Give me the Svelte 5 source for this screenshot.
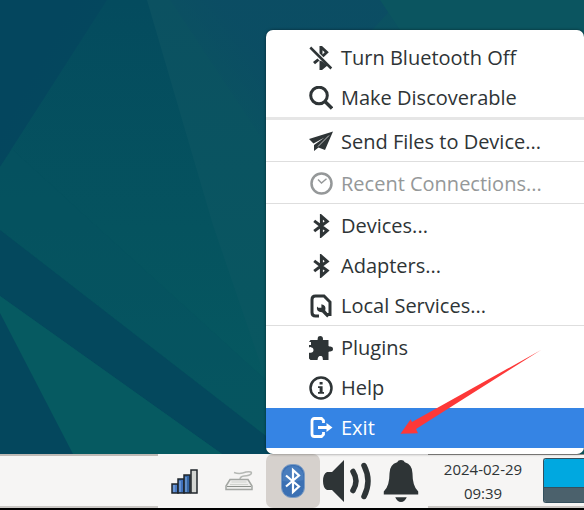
<script>
  const groups = [
    [
      { icon: 'bluetooth-off', label: 'Turn Bluetooth Off' },
      { icon: 'search', label: 'Make Discoverable' }
    ],
    [{ icon: 'send', label: 'Send Files to Device...' }],
    [{ icon: 'clock', label: 'Recent Connections...', disabled: true }],
    [
      { icon: 'bluetooth', label: 'Devices...' },
      { icon: 'bluetooth', label: 'Adapters...' },
      { icon: 'services', label: 'Local Services...' }
    ],
    [
      { icon: 'plugin', label: 'Plugins' },
      { icon: 'info', label: 'Help' },
      { icon: 'exit', label: 'Exit' }
    ]
  ];
  let active = $state('Exit');
</script>

{#snippet glyph(name)}
  <svg class="icon" viewBox="0 0 24 24" aria-hidden="true">
    {#if name === 'bluetooth-off'}
      <path d="M10.5 0h2.500l6.800 6.300-5.300 5-4-4zM13.500 4.200v4.300l2.200-2.200z" fill="currentColor" fill-rule="evenodd" />
      <path d="M4 16l4.500-3.500 2 2-4.500 3.700zM10.500 14.500l3 1 5 4-5.500 4.500h-2.500z" fill="currentColor" />
      <path d="M2.500 .5l21 21" stroke="#fff" stroke-width="1" />
      <path d="M1.300 1.500l21 21" stroke="currentColor" stroke-width="2.500" />
    {:else if name === 'search'}
      <circle cx="10" cy="9.500" r="8.300" class="line" stroke-width="3" />
      <path d="M16 15.500l7 7" class="line" stroke-width="3.400" />
    {:else if name === 'send'}
      <path d="M24 1.500L0 9l4.500 4.500L15.500 7.500 5 15v6l4.500-3.500 6.500 2.500z" fill="currentColor" />
      <path d="M20 5.500L9 16.500" stroke="#fff" stroke-width=".7" />
    {:else if name === 'clock'}
      <circle cx="12.500" cy="11.500" r="10" class="line" stroke-width="2.500" />
      <path d="M9 7.500l3.500 3.600 5-4.400" class="line" stroke-width="1.400" />
    {:else if name === 'bluetooth'}
      <path d="M5.200 6.900l13 9.800-5.800 5V2.300l5.800 5-13 9.800" class="line" stroke-width="3" />
    {:else if name === 'services'}
      <path d="M10 22H6.500Q3 22 3 18.500v-13Q3 2 6.500 2H15l6 6v12.500h-3" class="line" stroke-width="3" />
      <path d="M12.400 10.200v3.600h-3L8 12.600q-1 5.800 5 5.700l5.200 5.200 2.200-2.200-4.200-4.800q1.400-5.600-3.800-6.300z" fill="currentColor" />
    {:else if name === 'plugin'}
      <path d="M1.500 4H8.500C9 3 8 0 11.200 0S14 3 14 4h5.500v6c1 1 4.500-.2 4.500 3s-3.500 2-4.500 3v8H14c-.6-1.400.4-4-2.500-4S9 22.600 8.500 24H1.500L0 22.500V17c1.200-.6 4.500.2 4.500-3S1 11.500 0 11V9h2V6H0z" fill="currentColor" />
    {:else if name === 'info'}
      <circle cx="12" cy="12" r="10.500" class="line" stroke-width="2.500" />
      <path d="M10.600 6h3v2.600h-3zM9 10.300h4.600v5.700H15v1.700H9V16h1.600v-4H9z" fill="currentColor" />
    {:else}
      <path d="M14.500 7V4.500L12.500 2.500H5.500Q3 2.500 3 5v13Q3 20.500 5.500 20.500h7l2-2V16" class="line" stroke-width="2.800" />
      <path d="M9 10h8.500V7L23.500 11.500l-6 4.500v-3H9z" fill="currentColor" />
    {/if}
  </svg>
{/snippet}

<div class="screen">
  <main class="desktop">
    <svg class="wallpaper" viewBox="0 0 584 454" preserveAspectRatio="xMinYMin slice" aria-hidden="true">
      <defs>
        <linearGradient id="base" x1="0" y1="0" x2="0" y2="1">
          <stop offset="0" stop-color="#044b5e" />
          <stop offset=".5" stop-color="#05535f" />
          <stop offset="1" stop-color="#065a61" />
        </linearGradient>
        <linearGradient id="beam" x1="0" y1="0" x2="0" y2="1">
          <stop offset="0" stop-color="#0b5161" />
          <stop offset="1" stop-color="#085961" />
        </linearGradient>
        <linearGradient id="corner" gradientUnits="userSpaceOnUse" x1="40" y1="60" x2="85" y2="85">
          <stop offset="0" stop-color="#04465e" />
          <stop offset=".6" stop-color="#04475e" />
          <stop offset="1" stop-color="#04495e" />
        </linearGradient>
        <linearGradient id="haze" gradientUnits="userSpaceOnUse" x1="200" y1="80" x2="250" y2="40">
          <stop offset="0" stop-color="#0b4c64" stop-opacity="0" />
          <stop offset="1" stop-color="#0b4c64" stop-opacity=".8" />
        </linearGradient>
      </defs>
      <rect width="584" height="454" fill="url(#base)" />
      <path d="M147 0h437v454H266v-74L213 225z" fill="url(#beam)" />
      <path d="M170 0h230L266 145z" fill="url(#haze)" />
      <path d="M380 0h204v60H420z" fill="#0b5560" />
      <path d="M0 0h107L0 167z" fill="url(#corner)" />
      <path d="M0 167l12-18 83 76 171 155v56L0 230z" fill="#05525f" opacity=".5" />
      <path d="M0 230l266 206 24 18h-68L0 296z" fill="#04485d" />
      <path d="M0 296l222 158H0z" fill="#065a61" />
      <path d="M0 313l73 141H0z" fill="#04475d" />
    </svg>

    <div class="menu" role="menu" aria-label="Bluetooth">
      {#each groups as group, i}
        {#if i > 0}
          <div class="separator" class:heavy={i === 1} role="separator"></div>
        {/if}
        {#each group as item}
          <button
            class="item"
            class:active={active === item.label}
            role="menuitem"
            disabled={item.disabled}
            onmouseenter={() => (active = item.label)}
          >
            {@render glyph(item.icon)}
            <span>{item.label}</span>
          </button>
        {/each}
      {/each}
      <svg class="arrow" viewBox="0 0 140 86" aria-hidden="true">
        <path d="M140 1L11 73l-1.300-2.700L-.5 84.700l17.500-.4L15 80z" fill="#fd3838" />
      </svg>
    </div>
  </main>

  <footer class="panel">
    <div class="tasks"></div>
    <div class="tray">
      <button class="small" aria-label="Network">
        <svg width="28" height="26" viewBox="0 -1 28 26">
          <g stroke="#20262b" stroke-width="1.500">
            <path d="M1 15h6v9H1z" fill="#4c7cc4" />
            <path d="M7 10h6v14H7z" fill="#3f70bb" />
            <path d="M13 6h6v18h-6z" fill="#3465a4" />
            <path d="M20 1h6v23h-6z" fill="#d3d5d2" />
          </g>
          <path d="M3 16v7M9 12v11M15 8v15" stroke="#82abe0" stroke-width="1.200" />
        </svg>
      </button>
      <button class="small" aria-label="Keyboard">
        <svg width="28" height="26" viewBox="0 -1 28 26" fill="none">
          <path d="M9 3.500q6 2 12-.5 7-1 5 2-1 1.500-7 2-4 .5-4 3.500" stroke="#b5b8b4" stroke-width="1.500" />
          <path d="M5 10.500h18l4 6.500v3.500H1V17z" fill="#eeeeec" stroke="#a3a6a2" stroke-width="1.500" />
          <path d="M6.500 13h15M5 15.500h18" stroke="#d0d3ce" />
          <path d="M2 17.500h24" stroke="#8d918c" />
        </svg>
      </button>
      <button class="bluetooth" aria-label="Bluetooth">
        <svg width="24" height="34" viewBox="0 0 24 34">
          <rect x=".5" y=".5" width="23" height="33" rx="10" fill="#3b70b3" stroke="#7c9cc4" />
          <path d="M1.500 13a10.500 11 0 0 1 21 0v3q-10 3-21 1z" fill="#5486c3" opacity=".6" />
          <path d="M5 11.500l13 11-6 5.500V6l6 5.500-13 11" fill="none" stroke="#fff" stroke-width="2.200" />
        </svg>
      </button>
      <button class="large" aria-label="Volume">
        <svg width="48" height="42" viewBox="0 0 48 42">
          <path d="M21 0v42L9 30H4q-4-2-4-9t4-9h5z" fill="#2e3436" />
          <path d="M30 11.500q6 9.500 0 19M41 5.500q8 15.500 0 31" fill="none" stroke="#2e3436" stroke-width="5.500" stroke-linecap="round" />
        </svg>
      </button>
      <button class="large" aria-label="Notifications">
        <svg width="36" height="44" viewBox="0 -1 36 46">
          <path d="M18 0q3 0 4 2.500Q30 5 30 14q0 14 6 19v3H0v-3q6-5 6-19Q6 5 14 2.500 15 0 18 0zM12 39h12q-2 5-6 5t-6-5z" fill="#2e3436" />
        </svg>
      </button>
    </div>
    <time class="clock" datetime="2024-02-29T09:39"><span>2024-02-29</span><span>09:39</span></time>
    <div class="pager-slot">
      <div class="pager" role="group" aria-label="Workspaces">
        <button class="workspace current" aria-label="Workspace 1"></button>
        <button class="workspace" aria-label="Workspace 2"></button>
      </div>
    </div>
  </footer>
</div>

<style>
  :global(body) {
    margin: 0;
    background: #000;
  }
  .screen {
    box-sizing: border-box;
    min-height: 100vh;
    display: flex;
    flex-direction: column;
    padding-bottom: 2px;
    font-family: 'Open Sans', 'Noto Sans', sans-serif;
    color: #2e3436;
  }
  button {
    margin: 0;
    padding: 0;
    border: 0;
    background: none;
    color: inherit;
    font: inherit;
  }
  svg {
    display: block;
  }
  .desktop {
    position: relative;
    flex: 1;
    display: flex;
    justify-content: flex-end;
    align-items: flex-end;
    padding-top: 24px;
    background: #05535f;
  }
  .wallpaper {
    position: absolute;
    inset: 0;
    width: 100%;
    height: 100%;
  }
  .menu {
    position: relative;
    z-index: 1;
    box-sizing: border-box;
    width: 318px;
    padding: 8px 0 6px;
    border-radius: 7px;
    background: #fff;
    box-shadow: 0 0 3px rgba(0, 0, 0, 0.5);
  }
  .item {
    display: flex;
    align-items: center;
    gap: 8px;
    width: 100%;
    height: 40px;
    padding-left: 43px;
    font-size: 20px;
    line-height: 28px;
    text-align: left;
    white-space: nowrap;
  }
  .item:disabled {
    color: #959899;
  }
  .item.active {
    background: #3584e4;
    color: #fff;
  }
  .icon {
    width: 24px;
    height: 24px;
    flex: none;
  }
  .line {
    fill: none;
    stroke: currentColor;
  }
  .separator {
    box-sizing: border-box;
    height: 2px;
    margin: -1px 0 1px;
    border-top: 1px solid #dedede;
  }
  .separator.heavy {
    height: 4px;
    border-top: 3px solid #e6e6e6;
  }
  .arrow {
    position: absolute;
    left: 135px;
    bottom: 19px;
    width: 140px;
    height: 86px;
    overflow: visible;
    pointer-events: none;
  }
  .panel {
    display: flex;
    height: 54px;
    background: #f6f5f4;
  }
  .tasks {
    flex: 1;
    box-sizing: border-box;
    border-top: 2px solid #bfbab5;
    border-bottom: 2px solid #cac7c4;
  }
  .tray {
    display: flex;
    align-items: center;
  }
  .small,
  .bluetooth,
  .large {
    display: flex;
    align-items: center;
    justify-content: center;
    width: 54px;
    height: 54px;
  }
  .bluetooth {
    border-radius: 7px;
    background: #d6d1cd;
  }
  .clock {
    box-sizing: border-box;
    display: flex;
    flex-direction: column;
    justify-content: center;
    width: 110px;
    border-top: 1px solid #8f8d8b;
    border-bottom: 2px solid #cac7c4;
    font-size: 15px;
    line-height: 24px;
    text-align: center;
  }
  .pager-slot {
    box-sizing: border-box;
    display: flex;
    align-items: center;
    padding-left: 5px;
    border-top: 1px solid #8f8d8b;
    border-bottom: 2px solid #cac7c4;
  }
  .pager {
    box-sizing: border-box;
    display: flex;
    flex-direction: column;
    width: 41px;
    height: 45px;
    border: 1px solid #34505e;
    border-right: 0;
    border-radius: 3px 0 0 3px;
    overflow: hidden;
  }
  .workspace {
    flex: 1;
    background: #4b616c;
  }
  .workspace.current {
    flex: 2;
    background: #00a8e0;
    border-bottom: 1px solid #34505e;
  }
</style>
